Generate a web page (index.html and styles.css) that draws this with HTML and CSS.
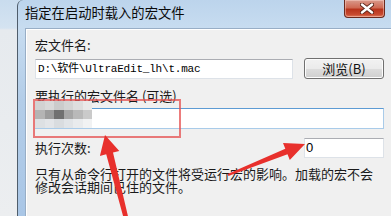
FILE: index.html
```html
<!DOCTYPE html>
<html>
<head>
<meta charset="utf-8">
<link rel="stylesheet" href="styles.css">
</head>
<body>
<div class="screen">
  <div class="window">
    <div class="titlebar">
      <span class="title">指定在启动时载入的宏文件</span>
      <div class="close">
        <svg width="14" height="11" viewBox="0 0 14 11"><path d="M2 1.5 L12 9.5 M12 1.5 L2 9.5" stroke="#5a2418" stroke-width="4.2" stroke-linecap="round"/><path d="M2 1.5 L12 9.5 M12 1.5 L2 9.5" stroke="#ffffff" stroke-width="2.4" stroke-linecap="round"/></svg>
      </div>
    </div>
    <div class="client">
      <div class="label first">宏文件名:</div>
      <div class="row">
        <div class="field grow mono">D:\软件\UltraEdit_lh\t.mac</div>
        <div class="btn">浏览(B)</div>
      </div>
      <div class="label second">要执行的宏文件名 (可选)</div>
      <div class="field focused"></div>
      <div class="row between">
        <span class="label">执行次数:</span>
        <div class="field small num">0</div>
      </div>
      <p class="note">只有从命令行打开的文件将受运行宏的影响。加载的宏不会<br>修改会话期间已住的文件。</p>
    </div>
  </div>

  <div class="mosaic">
    <i class="c1"></i><i class="c2"></i><i class="c3"></i><i class="c4"></i><i class="c5"></i><i class="c6"></i>
    <i class="d1"></i><i class="d2"></i><i class="d3"></i><i class="d4"></i><i class="d5"></i><i class="d6"></i>
    <i class="e1"></i><i class="e2"></i><i class="e3"></i><i class="e4"></i><i class="e5"></i><i class="e6"></i>
  </div>
  <div class="highlight"></div>
  <svg class="arrows" width="391" height="216" viewBox="0 0 391 216">
    <polygon fill="#e8302c" points="105,135 119.3,150.9 113,152.5 128.4,218 123.6,218 106.2,154.3 99.9,155.9"/>
    <polygon fill="#e8302c" points="305,144 289.8,159.9 287.5,154.3 228.4,175.9 227.6,174.1 285.3,148.7 283,143.1"/>
  </svg>
</div>
</body>
</html>
```

FILE: styles.css
```css
* { box-sizing: border-box; }
html, body { margin: 0; padding: 0; }
body {
  width: 391px;
  height: 216px;
  overflow: hidden;
  font-family: "Noto Sans CJK SC", "Noto Sans", sans-serif;
  font-size: 13px;
  color: #1a1a1a;
}
.screen {
  position: relative;
  width: 391px;
  height: 216px;
  overflow: hidden;
  display: flex;
  padding-left: 17px;
  background: linear-gradient(to bottom, #c9dcee 0px, #d4e3f1 28px, #e6eaee 30px, #eceef0 216px);
}
.window {
  flex: 0 0 384px;
  display: flex;
  flex-direction: column;
  border-left: 1px solid #4f5d6b;
  border-top-left-radius: 6px;
  background: linear-gradient(to bottom, #bcd4ec 0px, #c7dcf0 28px, #b3cde8 100px, #a9c6e6 216px);
  padding: 0 7px;
}
.titlebar {
  height: 28px;
  flex: 0 0 28px;
  display: flex;
  align-items: flex-start;
}
.title {
  font-size: 13.3px;
  color: #0a0a0a;
  line-height: 16px;
  margin-top: 5px;
}
.close {
  margin-left: auto;
  margin-right: 9px;
  width: 41px;
  height: 18px;
  border: 1px solid #6c2a1e;
  border-top: none;
  border-radius: 0 0 4px 4px;
  background: linear-gradient(to bottom, #d99a8c 0%, #cf6a54 45%, #b8341c 55%, #c74a30 85%, #e07a5c 100%);
  display: flex;
  align-items: center;
  justify-content: center;
  box-shadow: inset 0 0 0 1px rgba(255,220,210,0.45);
}
.close svg { display: block; margin-top: -1px; margin-left: 4px; }
.client {
  flex: 1;
  background: #f0f0f0;
  border-left: 1px solid #98aec6;
  border-top: 1px solid #98aec6;
  box-shadow: inset 1px 1px 0 #ffffff;
  padding: 8px 10px 0 9px;
  display: flex;
  flex-direction: column;
}
.label {
  line-height: 16px;
  height: 16px;
  color: #1a1a1a;
}
.label.first { margin-bottom: 5px; }
.label.second { margin-top: 9px; margin-bottom: 4px; }
.row {
  display: flex;
  align-items: center;
  gap: 10px;
}
.row.between {
  justify-content: space-between;
  margin-top: 9px;
}
.field {
  height: 20px;
  background: #ffffff;
  border: 1px solid #dde2e8;
  border-top-color: #abadb3;
  padding: 0 2px;
  line-height: 18px;
  color: #000;
}
.field.grow { flex: 0 0 258px; }
.field.small { width: 80px; margin-left: auto; }
.field.focused {
  height: 21px;
  border-color: #a9cbe9;
  border-top-color: #5d9bd4;
}
.mono {
  font-family: "Liberation Mono", "Noto Sans CJK SC", monospace;
  font-size: 11px;
  letter-spacing: -0.2px;
}
.num {
  font-family: "Liberation Sans", sans-serif;
  font-size: 13px;
  padding-left: 1px;
}
.btn {
  width: 80px;
  height: 21px;
  margin-left: auto;
  border: 1px solid #707070;
  border-radius: 3px;
  background: linear-gradient(to bottom, #f2f2f2 0%, #ebebeb 50%, #dddddd 51%, #cfcfcf 100%);
  box-shadow: inset 0 0 0 1px #fcfcfc;
  text-align: center;
  line-height: 19px;
  font-size: 13px;
  color: #111;
}
.note {
  margin: 9px 0 0 0;
  line-height: 13px;
  color: #1a1a1a;
}
.mosaic {
  position: absolute;
  left: 35px;
  top: 101px;
  display: grid;
  grid-template-columns: repeat(6, 9.5px);
  grid-template-rows: repeat(3, 9px);
}
.mosaic i { display: block; }
.c1 { background: #d2d2d2; } .c2 { background: #d9d9d9; } .c3 { background: #cbcbcb; }
.c4 { background: #d4d4d4; } .c5 { background: #dedede; } .c6 { background: #e9e9e9; }
.d1 { background: #b4b4b4; } .d2 { background: #9c9c9c; } .d3 { background: #707070; }
.d4 { background: #a6a6a6; } .d5 { background: #b9b9b9; } .d6 { background: #cacaca; }
.e1 { background: #dde0e3; } .e2 { background: #e3e5e8; } .e3 { background: #d9dcdf; }
.e4 { background: #e1e4e7; } .e5 { background: #e9ebed; } .e6 { background: #f1f2f3; }
.highlight {
  position: absolute;
  left: 33px;
  top: 99px;
  width: 148px;
  height: 39px;
  border: 2px solid rgba(230, 80, 80, 0.75);
}
.arrows {
  position: absolute;
  left: 0;
  top: 0;
  pointer-events: none;
}
```
